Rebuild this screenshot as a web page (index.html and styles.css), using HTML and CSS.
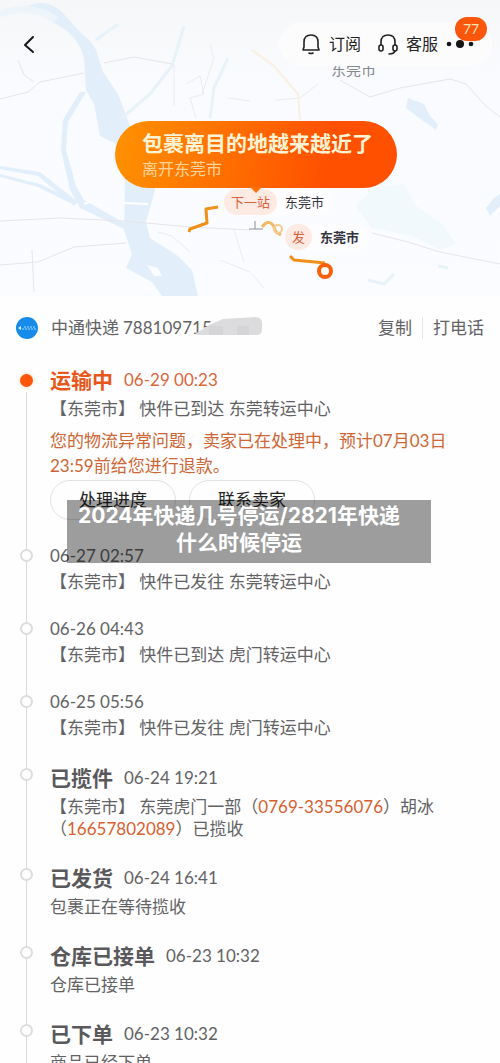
FILE: index.html
```html
<!DOCTYPE html>
<html lang="zh-CN">
  <head>
    <meta charset="UTF-8" />
    <meta name="viewport" content="width=device-width, initial-scale=1.0" />
    <title>物流详情</title>
    <link rel="stylesheet" href="styles.css">
  </head>
  <body>
    <div class="map">
      <svg class="map-bg" viewBox="0 0 500 296" preserveAspectRatio="xMidYMid slice" aria-hidden="true">
        <!-- rivers -->
        <g fill="#e2effb">
          <path d="M28 6 Q46 -2 62 12 L80 32 Q96 44 98 56 L103 72 L118 94 L130 126 L158 150 L155 190 L146 222 L150 238 L178 256 L192 270 L198 296 L162 296 L152 282 L126 268 L132 254 L124 230 L125 180 L128 150 L100 136 L94 104 L86 90 L84 58 Q78 34 52 22 Z" />
          <path d="M86 92 L68 122 L66 150 L76 186 L84 200 L126 224 L126 230 L80 208 L70 190 L61 150 L63 120 L80 92 Z" />
          <path d="M0 166 L40 172 L78 202 L74 206 L38 176 L0 169 Z" />
          <path d="M0 174 L40 184 L74 200 L70 203 L38 187 L0 177 Z" />
          <path d="M408 98 L424 104 L430 116 L438 124 L436 130 L422 120 L406 108 Z" />
          <path d="M486 208 L494 198 L500 194 L500 206 L490 216 Z" />
        </g>
        <path d="M0 14 Q30 2 56 20" fill="none" stroke="#edf5fb" stroke-width="7" />
        <path d="M147 265 L158 268 L162 276 L154 276 Z" fill="#fbfcff" />
        <path d="M356 206 L374 188 L404 184 L416 206 L442 224 L456 244 L440 250 L412 236 L372 228 Z" fill="#f1f9fc" />
        <path d="M84 204 L92 201 M124 203 L148 204" stroke="#fff" stroke-width="2" />
        <g fill="none" stroke="#e8f2f9" stroke-width="3">
          <path d="M122 118 L150 94 L172 66 L184 26" />
          <path d="M96 40 L118 24" />
          <path d="M228 58 L214 88 L210 118" />
          <path d="M368 280 L384 284 L394 274 M438 266 L448 268" />
        </g>
        <g fill="none" stroke="#eaecf1" stroke-width="1">
          <path d="M174 64 L174 106 M186 84 L200 76 L204 94 L190 98 L196 118 M210 45 L214 58 L202 94" />
          <path d="M158 232 L172 236 L190 252 M234 230 L244 262 M220 260 L250 272 M252 274 L264 288" />
          <path d="M276 100 L300 98 L318 84 M228 98 L250 101" />
        </g>
        <!-- roads -->
        <g fill="none" stroke="#e8e4ea" stroke-width="1">
          <path d="M0 99 L28 92 L40 82 L84 73 M104 63 L134 57 L172 64 M18 60 L24 75 L34 82" />
          <path d="M0 221 L60 218 L124 221 L190 227 L250 230" />
          <path d="M0 265 L38 262 L74 247 L126 243 M32 250 L34 292" />
          <path d="M372 233 L408 242 L440 252 L500 264" />
          <path d="M340 80 L370 97 L400 88 L450 79 L466 84 L486 106 L500 117" />
        </g>
        <path d="M252 50 L274 66 L298 94 L300 120" fill="none" stroke="#faf0e2" stroke-width="2" />
        <!-- parcel route -->
        <g fill="none" stroke="#ef9018" stroke-width="3" stroke-linejoin="round">
          <path d="M189 232 L190 229 L207 223 L206 209 L218 207" />
          <path d="M290 256 L294 260 L325 263" />
          <path d="M262 227 Q268 219 273 225 L276 232 L281 235" stroke="#f2b964" />
        </g>
        <circle cx="278" cy="229" r="4" fill="none" stroke="#f6cb92" stroke-width="2" />
        <path d="M249 229 H263 M255 229 V221" stroke="#8d8d94" stroke-width="1" />
        <circle cx="325" cy="271" r="6" fill="#fff" stroke="#f8600c" stroke-width="4" />
      </svg>

      <span class="map-city">东莞市</span>
      <header class="topbar">
        <button class="icon-button" aria-label="返回">
          <svg width="20" height="24" viewBox="0 0 20 24"><path d="M15 5 L7 13 L15 20" fill="none" stroke="#17181c" stroke-width="2" stroke-linecap="round" stroke-linejoin="round" /></svg>
        </button>
        <div class="actions">
          <button class="action">
            <svg width="20" height="22" viewBox="0 0 20 22" fill="none" stroke="#222" stroke-width="1.6" stroke-linecap="round" stroke-linejoin="round">
              <path d="M2 17 L3 14 V9 C3 4 6 2 10 2 S17 4 17 9 V14 L18 17 Z" />
              <path d="M8 20 Q10 21 12 20" />
            </svg>
            订阅
          </button>
          <button class="action">
            <svg width="22" height="22" viewBox="0 0 22 22" fill="none" stroke="#222" stroke-width="1.6" stroke-linecap="round">
              <path d="M4 12 V9 C4 4 7 2 11 2 S18 4 18 9 V12" />
              <rect x="2" y="12" width="4" height="6" rx="2" />
              <rect x="16" y="12" width="4" height="6" rx="2" />
              <path d="M18 18 Q17 21 12 21" />
            </svg>
            客服
          </button>
          <button class="more" aria-label="更多">
            <svg width="28" height="10" viewBox="0 0 28 10" fill="#151515">
              <circle cx="3" cy="5" r="2.3" />
              <circle cx="14" cy="5" r="4" />
              <circle cx="25" cy="5" r="2.3" />
            </svg>
            <span class="badge">77</span>
          </button>
        </div>
      </header>

      <div class="bubble">
        <h1>包裹离目的地越来越近了</h1>
        <p>离开东莞市</p>
      </div>
      <div class="pin next"><span class="tag">下一站</span>东莞市</div>
      <div class="pin from"><span class="tag">发</span>东莞市</div>
    </div>

    <div class="courier">
      <svg class="logo" width="22" height="22" viewBox="0 0 22 22" aria-hidden="true">
        <circle cx="11" cy="11" r="11" fill="#168bea" />
        <path d="M2 11 L5 9 V13 Z" fill="#d6f0ff" />
        <path d="M6 12 H20 M8 10 H19" stroke="#a6dcfb" stroke-width="1" stroke-dasharray="2 1" />
      </svg>
      <span>中通快递</span>
      <span class="number">788109715<svg class="smudge" width="67" height="20" viewBox="0 0 67 20" aria-hidden="true">
        <path d="M0 17 L14 8 L28 2 L60 0 Q67 0 67 6 V13 Q67 18 61 18 H4 Z" fill="#dcdcde" />
        <path d="M14 9 H28 V18 H14 Z M42 9 H54 V18 H42 Z" fill="#d5d5d8" />
      </svg></span>
      <button class="link copy">复制</button>
      <button class="link call">打电话</button>
    </div>

    <ol class="timeline">
      <li class="stage current">
        <div class="head"><h2>运输中</h2><time>06-29 00:23</time></div>
        <p>【东莞市】 快件已到达 东莞转运中心</p>
        <p class="notice">您的物流异常问题，卖家已在处理中，预计07月03日23:59前给您进行退款。</p>
        <div class="buttons">
          <button>处理进度</button>
          <button>联系卖家</button>
        </div>
      </li>
      <li>
        <div class="head"><time>06-27 02:57</time></div>
        <p>【东莞市】 快件已发往 东莞转运中心</p>
      </li>
      <li>
        <div class="head"><time>06-26 04:43</time></div>
        <p>【东莞市】 快件已到达 虎门转运中心</p>
      </li>
      <li>
        <div class="head"><time>06-25 05:56</time></div>
        <p>【东莞市】 快件已发往 虎门转运中心</p>
      </li>
      <li class="stage">
        <div class="head"><h2>已揽件</h2><time>06-24 19:21</time></div>
        <p>【东莞市】 东莞虎门一部（<a href="tel:0769-33556076">0769-33556076</a>）胡冰（<a href="tel:16657802089">16657802089</a>）已揽收</p>
      </li>
      <li class="stage">
        <div class="head"><h2>已发货</h2><time>06-24 16:41</time></div>
        <p>包裹正在等待揽收</p>
      </li>
      <li class="stage">
        <div class="head"><h2>仓库已接单</h2><time>06-23 10:32</time></div>
        <p>仓库已接单</p>
      </li>
      <li class="stage">
        <div class="head"><h2>已下单</h2><time>06-23 10:32</time></div>
        <p>商品已经下单</p>
      </li>
    </ol>

    <div class="caption">2024年快递几号停运/2821年快递什么时候停运</div>
  </body>
</html>
```

FILE: styles.css
```css
*,
*::before,
*::after {
  box-sizing: border-box;
  margin: 0;
  padding: 0;
}
body {
  position: relative;
  height: 100vh;
  overflow: hidden;
  background-color: #fefefe;
  color: #626265;
  font-family: Lato, "Noto Sans CJK SC", sans-serif;
  font-size: 17px;
  line-height: 22px;
}
button {
  border: none;
  background: none;
  color: inherit;
  font: inherit;
  cursor: pointer;
}
svg {
  display: block;
}

/* map */
.map {
  position: relative;
  z-index: 0;
  height: 296px;
  background: linear-gradient(#f6f7f8, #fafbfe 30%, #fbfcff);
}
.map-bg {
  position: absolute;
  z-index: -2;
  width: 100%;
  height: 100%;
}
.map-city {
  position: absolute;
  top: 58px;
  left: 331px;
  color: #85898c;
  font-size: 15px;
}
.topbar {
  position: relative;
  display: flex;
  align-items: center;
  justify-content: space-between;
  padding: 22px 8px 0 18px;
}
.actions {
  display: flex;
  align-items: center;
  height: 44px;
  padding: 0 18px 0 22px;
  border-radius: 22px;
  background-color: #fcfcfd;
  color: #222;
  font-size: 16px;
}
.action {
  display: flex;
  align-items: center;
  gap: 8px;
  margin-right: 16px;
}
.action + .action {
  gap: 7px;
  margin-right: 8px;
}
.more {
  position: relative;
}
.badge {
  position: absolute;
  right: -13px;
  bottom: 8px;
  width: 32px;
  border-radius: 12px;
  background-color: #fa560c;
  color: #ffe3b4;
  font-size: 14px;
  line-height: 24px;
  text-align: center;
}
.bubble {
  position: absolute;
  top: 121px;
  left: 23%;
  padding: 8px 24px 8px 27px;
  border-radius: 34px;
  background: linear-gradient(100deg, #ff9200, #ff5000 75%);
  color: #fff3d5;
}
.bubble::after {
  content: "";
  position: absolute;
  bottom: -5px;
  left: 50%;
  margin-left: -6px;
  border: 6px solid transparent;
  border-top-color: #ff7000;
  border-bottom: none;
}
.bubble h1 {
  font-size: 21px;
  line-height: 28px;
  white-space: nowrap;
}
.bubble p {
  color: #ffd49b;
  font-size: 16px;
  line-height: 23px;
}
.pin {
  position: absolute;
  display: flex;
  align-items: center;
  gap: 8px;
  padding-right: 10px;
  border-radius: 13px;
  background-color: #fdfdff;
  color: #34343e;
  font-size: 13px;
  line-height: 26px;
}
.pin .tag {
  padding: 0 7px;
  border-radius: 13px;
  background-color: #fdeae3;
  color: #d7623a;
  font-weight: normal;
}
.pin.next {
  top: 189px;
  left: 224px;
  z-index: -1;
}
.pin.from {
  top: 224px;
  left: 285px;
  font-weight: bold;
}

/* courier row */
.courier {
  display: flex;
  align-items: center;
  padding: 21px 16px 0;
}
.logo {
  margin-right: 13px;
}
.number {
  position: relative;
  margin-left: 4px;
}
.smudge {
  position: absolute;
  top: 0;
  left: 72px;
}
.copy {
  margin-left: auto;
}
.call {
  margin-left: 10px;
  padding-left: 10px;
  border-left: 1px solid #e6e6e8;
}

/* timeline */
.timeline {
  margin-top: 27px;
  list-style: none;
}
.timeline li {
  position: relative;
  padding: 0 40px 25px 50px;
}
.timeline li.stage:not(.current) {
  padding-bottom: 24px;
}
.timeline li::before {
  content: "";
  position: absolute;
  top: 17px;
  bottom: -4px;
  left: 26px;
  width: 1px;
  background-color: #dadadc;
}
.timeline li::after {
  content: "";
  position: absolute;
  top: 4px;
  left: 20px;
  width: 13px;
  height: 13px;
  border: 2px solid #dddde0;
  border-radius: 50%;
  background-color: #fff;
}
.timeline .current::before {
  top: 26px;
}
.timeline .current::after {
  top: 8px;
  border-color: #fd560b;
  background-color: #fd560b;
  box-shadow: 0 0 4px #ffd9b5;
}
.head {
  display: flex;
  align-items: center;
  gap: 11px;
  margin-bottom: 4px;
}
.head h2 {
  color: #59595c;
  font-size: 21px;
  line-height: 28px;
}
.current .head h2 {
  color: #e9561b;
}
.current .head time {
  color: #d9673a;
}
.timeline .notice {
  margin: 8px 0 2px;
  color: #cd6534;
  line-height: 25px;
}
.timeline a {
  color: #d8602f;
  text-decoration: none;
}
.buttons {
  display: flex;
  gap: 13px;
}
.buttons button {
  height: 40px;
  padding: 0 28px;
  border: 1px solid #e2e2e4;
  border-radius: 20px;
  color: #222;
}

/* caption over the list */
.caption {
  position: absolute;
  top: 500px;
  left: 50%;
  width: 364px;
  margin-left: -183px;
  padding: 2px 30px 7px 10px;
  background-color: rgba(0, 0, 0, 0.38);
  color: #fff;
  font-family: Inter, "Noto Sans CJK SC", sans-serif;
  font-size: 21px;
  font-weight: bold;
  line-height: 27px;
  text-align: center;
}
```
